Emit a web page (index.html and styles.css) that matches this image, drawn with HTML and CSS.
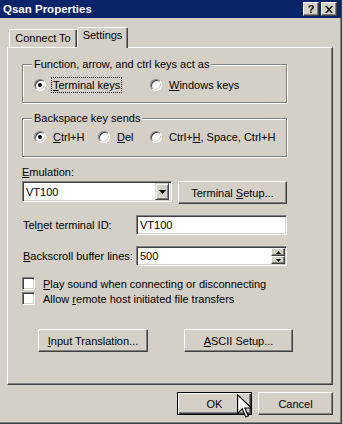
FILE: index.html
```html
<!DOCTYPE html>
<html lang="en">

<head>
    <meta charset="UTF-8">
    <title>Qsan Properties</title>
    <link rel="stylesheet" href="styles.css">
</head>

<body>
    <div class="window">
        <div class="titlebar">
            <span class="title">Qsan Properties</span>
            <div class="caption">
                <span class="cap-btn help">?</span>
                <span class="cap-btn">
                    <svg width="8" height="7" viewBox="0 0 8 7">
                        <path d="M0 0h2l2 2.5L6 0h2L5 3.5 8 7H6L4 4.5 2 7H0l3-3.5z" fill="#000"/>
                    </svg>
                </span>
            </div>
        </div>

        <div class="content">
            <div class="tabs">
                <div class="tab">Connect To</div>
                <div class="tab active">Settings</div>
            </div>

            <div class="panel">
                <fieldset class="group g1">
                    <legend>Function, arrow, and ctrl keys act as</legend>
                    <div class="radios">
                        <div class="radio w116"><span class="circle on"></span><span class="lbl focus"><u>T</u>erminal keys</span></div>
                        <div class="radio"><span class="circle"></span><span class="lbl"><u>W</u>indows keys</span></div>
                    </div>
                </fieldset>

                <fieldset class="group g2">
                    <legend>Backspace key sends</legend>
                    <div class="radios">
                        <div class="radio w64"><span class="circle on"></span><span class="lbl"><u>C</u>trl+H</span></div>
                        <div class="radio w52"><span class="circle"></span><span class="lbl"><u>D</u>el</span></div>
                        <div class="radio"><span class="circle"></span><span class="lbl">Ctrl+<u>H</u>, Space, Ctrl+H</span></div>
                    </div>
                </fieldset>

                <div class="label-top"><u>E</u>mulation:</div>
                <div class="row emul">
                    <div class="combo">
                        <span class="value">VT100</span>
                        <span class="drop">
                            <svg width="7" height="4" viewBox="0 0 7 4"><path d="M0 0h7L3.5 4z" fill="#000"/></svg>
                        </span>
                    </div>
                    <div class="btn setup"><span>Terminal <u>S</u>etup...</span></div>
                </div>

                <div class="row field">
                    <span class="flabel">Tel<u>n</u>et terminal ID:</span>
                    <div class="edit">VT100</div>
                </div>

                <div class="row field">
                    <span class="flabel"><u>B</u>ackscroll buffer lines:</span>
                    <div class="edit spin">
                        <span>500</span>
                        <span class="arrows">
                            <span class="arr"><svg width="5" height="3" viewBox="0 0 5 3"><path d="M2.5 0L5 3H0z" fill="#000"/></svg></span>
                            <span class="arr"><svg width="5" height="3" viewBox="0 0 5 3"><path d="M0 0h5L2.5 3z" fill="#000"/></svg></span>
                        </span>
                    </div>
                </div>

                <div class="check first"><span class="box"></span><span><u>P</u>lay sound when connecting or disconnecting</span></div>
                <div class="check"><span class="box"></span><span>Allow <u>r</u>emote host initiated file transfers</span></div>

                <div class="row actions">
                    <div class="btn translate"><span><u>I</u>nput Translation...</span></div>
                    <div class="btn ascii"><span><u>A</u>SCII Setup...</span></div>
                </div>
            </div>

            <div class="footer">
                <div class="btn default"><span>OK</span></div>
                <div class="btn"><span>Cancel</span></div>
            </div>
        </div>

        <svg class="pointer" width="14" height="27" viewBox="0 0 12 21">
            <path d="M0.5 0.5v16l4-4 3 7 2.2-1-3-6.7h5.6z" fill="#fff" stroke="#000" stroke-width="1"/>
        </svg>
    </div>
</body>

</html>
```

FILE: styles.css
```css
* {
    box-sizing: border-box;
}

body {
    margin: 0;
    background-color: #d4d0c8;
    font-family: "Liberation Sans", Arial, sans-serif;
    font-size: 11px;
    color: #000;
}

u {
    text-decoration: underline;
    text-underline-offset: 1px;
}

.window {
    position: relative;
    width: 342px;
    height: 424px;
    border-right: 1px solid #404040;
    border-bottom: 1px solid #404040;
    box-shadow: inset -1px -1px #808080;
}

/* title bar */
.titlebar {
    height: 18px;
    background-color: #0a246a;
    display: flex;
    align-items: center;
    justify-content: space-between;
    padding: 0 4px 0 3px;
}

.title {
    color: #fff;
    font-weight: bold;
    font-size: 11.5px;
}

.caption {
    display: flex;
    gap: 2px;
}

.cap-btn {
    width: 16px;
    height: 14px;
    background-color: #d4d0c8;
    border: 1px solid;
    border-color: #fff #404040 #404040 #fff;
    box-shadow: inset -1px -1px #808080;
    display: flex;
    align-items: center;
    justify-content: center;
}

.help {
    font-weight: bold;
    font-size: 11px;
    line-height: 1;
}

/* tabs */
.content {
    padding: 9px 0 0 7px;
}

.tabs {
    position: relative;
    z-index: 1;
    display: flex;
    align-items: flex-end;
    height: 20px;
    padding-left: 2px;
}

.tab {
    height: 18px;
    padding-top: 2px;
    text-align: center;
    width: 68px;
    border-top: 1px solid #fff;
    border-left: 1px solid #fff;
    border-right: 1px solid #404040;
    box-shadow: inset -1px 0 #808080;
    border-radius: 2px 2px 0 0;
    background-color: #d4d0c8;
}

.tab.active {
    width: 51px;
    height: 21px;
    margin-bottom: -1px;
    padding-top: 1px;
}

.panel {
    width: 326px;
    height: 338px;
    border: 1px solid;
    border-color: #fff #404040 #404040 #fff;
    box-shadow: inset -1px -1px #808080;
    padding: 10px 0 0 14px;
}

/* group boxes */
.group {
    width: 265px;
    margin: 0;
    padding: 6px 0 9px 0;
    border: 1px solid #808080;
    box-shadow: inset 1px 1px #fff, 1px 1px #fff;
}

.group legend {
    margin-left: 9px;
    padding: 0 2px;
    line-height: 13px;
    background-color: #d4d0c8;
}

.g2 {
    margin-top: 9px;
    padding: 4px 0 11px 0;
}

.radios {
    display: flex;
    align-items: center;
    height: 16px;
    padding-left: 11px;
}

.radio {
    display: flex;
    align-items: center;
}

.w116 {
    width: 116px;
}

.w64 {
    width: 64px;
}

.w52 {
    width: 52px;
}

.circle {
    width: 12px;
    height: 12px;
    border-radius: 50%;
    background-color: #fff;
    border: 1px solid;
    border-color: #808080 #fff #fff #808080;
    box-shadow: inset 1px 1px #404040, inset -1px -1px #d4d0c8;
    display: flex;
    align-items: center;
    justify-content: center;
}

.circle.on::after {
    content: "";
    width: 4px;
    height: 4px;
    border-radius: 50%;
    background-color: #000;
}

.lbl {
    margin-left: 5px;
    padding: 0 1px;
    line-height: 14px;
    border: 1px dotted transparent;
}

.lbl.focus {
    border-color: #000;
}

/* fields */
.label-top {
    margin-top: 9px;
    line-height: 13px;
}

.row {
    display: flex;
    align-items: center;
}

.emul {
    margin-top: 2px;
    align-items: flex-start;
}

.combo {
    width: 150px;
    height: 21px;
    background-color: #fff;
    border: 1px solid;
    border-color: #808080 #fff #fff #808080;
    box-shadow: inset 1px 1px #404040, inset -1px -1px #d4d0c8;
    display: flex;
    align-items: center;
    justify-content: space-between;
    padding: 2px;
    padding-left: 3px;
}

.drop {
    width: 14px;
    height: 17px;
    background-color: #d4d0c8;
    border: 1px solid;
    border-color: #d4d0c8 #404040 #404040 #d4d0c8;
    box-shadow: inset 1px 1px #fff, inset -1px -1px #808080;
    display: flex;
    align-items: center;
    justify-content: center;
}

.btn {
    height: 23px;
    display: flex;
    align-items: center;
    justify-content: center;
    border: 1px solid;
    border-color: #fff #404040 #404040 #fff;
    box-shadow: inset -1px -1px #808080, inset 1px 1px #d4d0c8;
}

.setup {
    width: 109px;
    margin-left: 6px;
}

.field {
    margin-top: 11px;
}

.flabel {
    width: 114px;
    padding-left: 1px;
}

.edit {
    width: 151px;
    height: 20px;
    background-color: #fff;
    border: 1px solid;
    border-color: #808080 #fff #fff #808080;
    box-shadow: inset 1px 1px #404040, inset -1px -1px #d4d0c8;
    display: flex;
    align-items: center;
    padding-left: 3px;
}

.spin {
    justify-content: space-between;
    padding-right: 1px;
}

.arrows {
    display: flex;
    flex-direction: column;
}

.arr {
    width: 14px;
    height: 8px;
    background-color: #d4d0c8;
    border: 1px solid;
    border-color: #fff #404040 #404040 #fff;
    box-shadow: inset -1px -1px #808080;
    display: flex;
    align-items: center;
    justify-content: center;
}

/* checkboxes */
.check {
    display: flex;
    align-items: center;
    height: 13px;
    margin-top: 2px;
}

.check.first {
    margin-top: 11px;
}

.box {
    width: 13px;
    height: 13px;
    margin-right: 8px;
    background-color: #fff;
    border: 1px solid;
    border-color: #808080 #fff #fff #808080;
    box-shadow: inset 1px 1px #404040, inset -1px -1px #d4d0c8;
}

.actions {
    margin-top: 24px;
    padding-left: 16px;
}

.translate {
    width: 110px;
}

.ascii {
    width: 109px;
    margin-left: 36px;
}

/* dialog buttons */
.footer {
    width: 326px;
    margin-top: 7px;
    display: flex;
    justify-content: flex-end;
    gap: 6px;
}

.footer .btn {
    width: 75px;
}

.btn.default {
    border: 1px solid #000;
    box-shadow: inset 1px 1px #fff, inset -1px -1px #404040, inset -2px -2px #808080;
}

.pointer {
    position: absolute;
    left: 237px;
    top: 393px;
}
```
